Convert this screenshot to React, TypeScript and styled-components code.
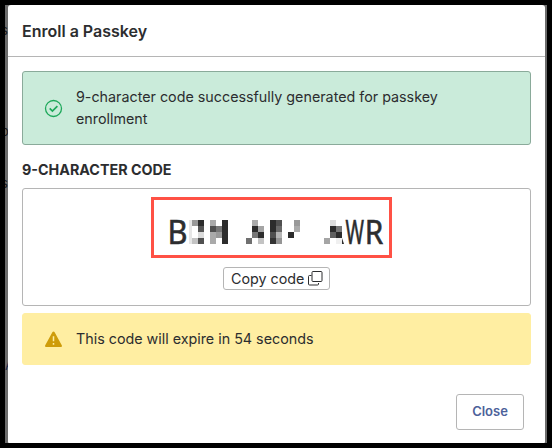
import React from 'react';
import styled, { createGlobalStyle } from 'styled-components';

const GlobalStyle = createGlobalStyle`
  * { box-sizing: border-box; }
  html, body, #root { height: 100%; }
  body {
    margin: 0;
    background: #000;
    color: #2c2d2f;
    font-family: Inter, "Liberation Sans", sans-serif;
    font-size: 14.3px;
  }
`;

const Frame = styled.div`
  width: 552px;
  height: 448px;
  padding: 5px;
  background: #000;
  overflow: hidden;
`;

const Backdrop = styled.div`
  position: relative;
  width: 542px;
  height: 438px;
  padding: 0 2px 0 3px;
  background: #6c6c6c;
  overflow: hidden;
`;

const PageText = styled.span<{ $top: number; $blue?: boolean }>`
  position: absolute;
  left: ${(p) => (p.$blue ? 0 : -4)}px;
  top: ${(p) => p.$top}px;
  font-size: 13px;
  line-height: 16px;
  color: ${(p) => (p.$blue ? '#1c2a4e' : '#1c1c1c')};
`;

const Dialog = styled.section`
  position: relative;
  display: flex;
  flex-direction: column;
  height: 438px;
  background: #fff;
  border-radius: 3px 3px 1px 1px;
`;

const Header = styled.header`
  height: 52px;
  padding: 0 14px;
  border-bottom: 1px solid #b5b5b5;
`;

const Title = styled.h1`
  margin: 0;
  font-size: 16px;
  font-weight: 600;
  line-height: 52px;
`;

const Body = styled.div`
  display: flex;
  flex-direction: column;
  padding: 14px 14px 0;
`;

const Alert = styled.div<{ $kind: 'success' | 'warning' }>`
  display: flex;
  align-items: center;
  gap: 13px;
  height: ${(p) => (p.$kind === 'success' ? 74 : 52)}px;
  padding: 0 21px;
  border: 1px solid ${(p) => (p.$kind === 'success' ? '#8aaa9a' : '#ffeea2')};
  border-radius: 3px;
  background: ${(p) => (p.$kind === 'success' ? '#caebda' : '#ffeea2')};
  line-height: 22px;
  svg { flex: none; }
`;

const Label = styled.h2`
  margin: 14px 0 7px;
  font-size: 14.3px;
  font-weight: 700;
  line-height: 22px;
`;

const CodePanel = styled.div`
  display: flex;
  flex-direction: column;
  align-items: center;
  height: 118px;
  margin-bottom: 7px;
  padding-top: 8px;
  border: 1px solid #b5b5b5;
  border-radius: 3px;
`;

const CodeHighlight = styled.div`
  width: 241px;
  height: 61px;
  margin-left: -11px;
  border: 3px solid #ff5145;
  svg { display: block; }
`;

const CopyButton = styled.button`
  display: flex;
  align-items: center;
  gap: 4px;
  width: 107px;
  height: 23px;
  margin-top: 9px;
  padding: 0 7px;
  border: 1px solid #b5b5b5;
  border-radius: 3px;
  background: #fff;
  color: inherit;
  font: inherit;
  white-space: nowrap;
  svg { flex: none; }
`;

const Footer = styled.footer`
  display: flex;
  justify-content: flex-end;
  margin-top: 29px;
  padding-right: 21px;
`;

const CloseButton = styled.button`
  width: 68px;
  height: 36px;
  padding: 0 0 2px;
  border: 1px solid #b5b5b5;
  border-radius: 3px;
  background: #fff;
  color: #4c619a;
  font: 600 13px Inter, sans-serif;
`;

// Each entry is [x, y, shade, width] for one redaction tile.
const tiles: [number, number, string, number?][] = [
  [189, 220, '#e6e6e6', 3], [189, 226, '#e6e6e6', 3], [189, 232, '#e6e6e6', 3], [189, 238, '#e6e6e6', 3],
  [192, 220, '#989898'], [198, 220, '#2c2c2c'],
  [198, 226, '#555555'], [198, 232, '#dadada'],
  [192, 238, '#c3c3c3'], [198, 238, '#505050'],
  [210, 220, '#aaaaaa'], [222, 220, '#2c2c2c'],
  [210, 226, '#505050'], [216, 226, '#777777'], [222, 226, '#2c2c2c'],
  [210, 232, '#aaaaaa'], [216, 232, '#999999'], [222, 232, '#2c2c2c'],
  [210, 238, '#aaaaaa'], [222, 238, '#2c2c2c'],
  [252, 220, '#aaaaaa'],
  [252, 226, '#2c2c2c'], [258, 226, '#a5a5a5'],
  [252, 232, '#777777'], [258, 232, '#2c2c2c'],
  [246, 238, '#707070'], [258, 238, '#c3c3c3'],
  [270, 220, '#2c2c2c'], [276, 220, '#505050'],
  [270, 226, '#2c2c2c'], [276, 226, '#696969'],
  [270, 232, '#505050'], [276, 232, '#b5b5b5'],
  [270, 238, '#333333'], [276, 238, '#959595'],
  [294, 220, '#999999'], [294, 226, '#aaaaaa'], [288, 232, '#2c2c2c'],
  [330, 220, '#dddddd'],
  [330, 226, '#2c2c2c'], [336, 226, '#777777'],
  [330, 232, '#606060'], [336, 232, '#2c2c2c'],
  [324, 238, '#a5a5a5'], [336, 238, '#f0f0f0'],
];

const Code = () => (
  <svg width="235" height="55" viewBox="154 200 235 55">
    <g fill="#2c2d2f" stroke="#2c2d2f" strokeWidth=".6" fontFamily='"Noto Sans", sans-serif' fontSize="33">
      <text x="167.5" y="244" textLength="20" lengthAdjust="spacingAndGlyphs">B</text>
      <text x="345.5" y="244" textLength="18.5" lengthAdjust="spacingAndGlyphs">W</text>
      <text x="364.7" y="244" textLength="18.5" lengthAdjust="spacingAndGlyphs">R</text>
    </g>
    <path d="M342 238l2 6h-2z" fill="#2c2c2c" />
    <g shapeRendering="crispEdges">
      {tiles.map(([x, y, fill, w]) => (
        <rect key={`${x}-${y}`} x={x} y={y} width={w ?? 6} height="6" fill={fill} />
      ))}
    </g>
  </svg>
);

const CheckIcon = () => (
  <svg width="19" height="19" viewBox="0 0 19 19" fill="none" stroke="#1da85a">
    <circle cx="9.5" cy="9.5" r="8" strokeWidth="1.3" />
    <path d="M5.7 9.4l2.7 2.7 5-5" strokeWidth="1.7" />
  </svg>
);

const WarningIcon = () => (
  <svg width="19" height="19" viewBox="0 0 19 19">
    <path d="M9.5 1.5q.6 0 1 .6l7.4 13.4q.5 1.4-.8 1.4H1.9q-1.3 0-.8-1.4L8.5 2.1q.4-.6 1-.6z" fill="#ce9c0a" />
    <path d="M9.5 6.3v5M9.5 13v1.7" stroke="#ffeea2" strokeWidth="1.5" />
  </svg>
);

const CopyIcon = () => (
  <svg width="15" height="15" viewBox="0 0 15 15" fill="none" stroke="#2c2d2f">
    <rect x="4" y=".5" width="10" height="10" rx="1" />
    <path d="M3.5 4.5H1.5q-1 0-1 1v7.5q0 1 1 1h8q1 0 1-1v-1" />
  </svg>
);

export default function App() {
  return (
    <Frame>
      <GlobalStyle />
      <Backdrop>
        <PageText $top={17}>s</PageText>
        <PageText $top={118}>o</PageText>
        <PageText $top={170}>s</PageText>
        <PageText $top={352} $blue>A</PageText>
        <Dialog>
          <Header><Title>Enroll a Passkey</Title></Header>
          <Body>
            <Alert $kind="success">
              <CheckIcon />
              <span>9-character code successfully generated for passkey enrollment</span>
            </Alert>
            <Label>9-CHARACTER CODE</Label>
            <CodePanel>
              <CodeHighlight><Code /></CodeHighlight>
              <CopyButton>Copy code<CopyIcon /></CopyButton>
            </CodePanel>
            <Alert $kind="warning">
              <WarningIcon />
              <span>This code will expire in 54 seconds</span>
            </Alert>
          </Body>
          <Footer><CloseButton>Close</CloseButton></Footer>
        </Dialog>
      </Backdrop>
    </Frame>
  );
}
